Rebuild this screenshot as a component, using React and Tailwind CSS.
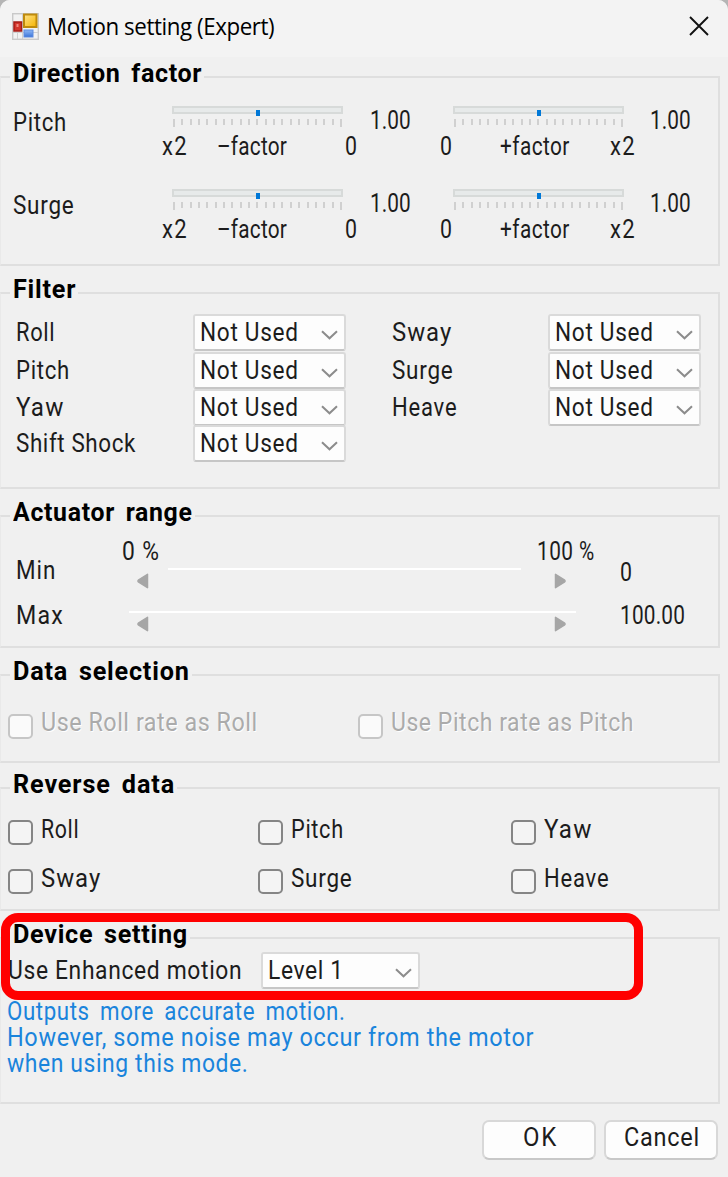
import React from "react";
import clsx from "clsx";

// Narrow UI lettering: squeezed glyphs, tracked out to fill the given width
function Text({ w, min = 0.8, className, children }) {
  const ref = React.useRef(null);
  const [fit, setFit] = React.useState({ scale: 1, spacing: 0 });

  React.useLayoutEffect(() => {
    const el = ref.current;
    el.style.letterSpacing = "0px";
    const natural = el.offsetWidth;
    const gaps = children.length - 1;
    const scale = gaps
      ? Math.min(Math.max((w / natural) * 0.95, min), 0.97)
      : 0.82;
    const spacing = gaps ? (w / scale - natural) / gaps : 0;
    el.style.letterSpacing = `${spacing}px`;
    setFit({ scale, spacing });
  }, [w, min, children]);

  return (
    <span
      className={clsx("block h-[26px] shrink-0 pl-px whitespace-nowrap", className)}
      style={{ width: w + 2 }}
    >
      <span
        ref={ref}
        className="inline-block origin-left"
        style={{ letterSpacing: fit.spacing, transform: `scaleX(${fit.scale})` }}
      >
        {children}
      </span>
    </span>
  );
}

function Group({ title, titleWidth, className, children }) {
  return (
    <section
      className={clsx(
        "w-[720px] shrink-0 border-2 border-l border-[#dfdfdf] border-l-[#e9e9e9]",
        className
      )}
    >
      <h2 className="-mt-[18px] ml-[9px] h-[26px] w-fit bg-[#f0f0f0] px-[2px] font-bold text-black [word-spacing:4px]">
        <Text w={titleWidth}>{title}</Text>
      </h2>
      {children}
    </section>
  );
}

function Track() {
  return (
    <div className="w-[171px]">
      <div className="flex h-2 justify-center border-2 border-[#d7dad9] bg-[#e7eaea]">
        <div className="mt-[2px] h-[6px] w-1 shrink-0 bg-[#0078d7]" />
      </div>
      <div className="mt-[5px] flex h-2 justify-between px-[1px]">
        {Array.from({ length: 21 }, (_, i) => (
          <span
            key={i}
            className={clsx(
              "w-[2px] bg-[#d0d0d0]",
              i === 0 || i === 20 ? "h-2" : "h-[6px]"
            )}
          />
        ))}
      </div>
    </div>
  );
}

function FactorRow({ label, labelWidth }) {
  return (
    <div className="flex h-[82.5px]">
      <div className="w-[160px] pt-[23px] pl-[11px]">
        <Text w={labelWidth}>{label}</Text>
      </div>
      <div className="w-[208px] pt-5">
        <div className="pl-[11px]">
          <Track />
        </div>
        <div className="mt-[6px] flex">
          <Text w={25}>x2</Text>
          <Text w={70} className="ml-[28px]">–factor</Text>
          <Text w={12} className="ml-[56px]">0</Text>
        </div>
      </div>
      <Text w={41} className="mt-[21px]">1.00</Text>
      <div className="ml-[27px] w-[209px] pt-5">
        <div className="pl-[14px]">
          <Track />
        </div>
        <div className="mt-[6px] flex">
          <Text w={12}>0</Text>
          <Text w={69} className="ml-[46px]">+factor</Text>
          <Text w={25} className="ml-[39px]">x2</Text>
        </div>
      </div>
      <Text w={41} className="mt-[21px] ml-[1px]">1.00</Text>
    </div>
  );
}

function Chevron() {
  return (
    <svg className="h-[10px] w-[17px]" viewBox="0 0 17 10" fill="none">
      <path d="M1 1.200 8.500 8.300 16 1.200" stroke="#8c8c8c" strokeWidth="2" />
    </svg>
  );
}

function Combo({ value, valueWidth, className }) {
  return (
    <div
      className={clsx(
        "flex h-[37px] shrink-0 justify-between rounded-[3px] border-2 border-[#dadada] border-b-[#c6c6c6] bg-[#fdfdfd] pt-[3px] pr-[6px] pl-[4px]",
        className
      )}
    >
      <Text w={valueWidth}>{value}</Text>
      <div className="pt-[11px]">
        <Chevron />
      </div>
    </div>
  );
}

const leftFilters = [
  { label: "Roll", w: 39, row: "h-[37.5px]" },
  { label: "Pitch", w: 53, row: "h-[37.5px]" },
  { label: "Yaw", w: 47, row: "h-[36px]" },
  { label: "Shift Shock", w: 119, row: "h-[37px]" },
];

const rightFilters = [
  { label: "Sway", w: 59, row: "h-[37.5px]" },
  { label: "Surge", w: 61, row: "h-[37.5px]" },
  { label: "Heave", w: 65, row: "h-[37px]" },
];

function FilterColumn({ items, className }) {
  return (
    <div className={className}>
      {items.map((item) => (
        <div key={item.label} className={clsx("flex justify-between", item.row)}>
          <Text w={item.w} className="mt-[5px]">
            {item.label}
          </Text>
          <Combo value="Not Used" valueWidth={98} className="w-[153px]" />
        </div>
      ))}
    </div>
  );
}

function Arrow({ right }) {
  return (
    <svg
      className={clsx("h-[16px] w-[12px]", right && "rotate-180")}
      viewBox="0 0 12 16"
    >
      <path
        d="M10.5 1.3 1.3 7.2Q.6 8 1.3 8.8L10.5 14.7Z"
        fill="#a6a6a6"
        stroke="#a6a6a6"
        strokeWidth="1.5"
        strokeLinejoin="round"
      />
    </svg>
  );
}

function Check({ label, w, disabled, className }) {
  return (
    <label className={clsx("flex", className)}>
      <span
        className={clsx(
          "h-[25px] w-[25px] shrink-0 rounded-[5px] border-2",
          disabled
            ? "mt-[5px] border-[#c6c6c6] bg-[#fafafa]"
            : "mt-[4px] border-[#858585] bg-[#f4f4f4]"
        )}
      />
      <Text
        w={w}
        className={clsx(
          "ml-[7px]",
          disabled && "text-[#ababab] [text-shadow:1px_1px_0_#ffffff]"
        )}
      >
        {label}
      </Text>
    </label>
  );
}

function AppIcon() {
  return (
    <svg className="h-[27px] w-[27px]" viewBox="0 0 27 27">
      <defs>
        <linearGradient id="gold" x1="0" y1="0" x2="1" y2="1">
          <stop offset="0" stopColor="#ffe38a" />
          <stop offset="1" stopColor="#f5b400" />
        </linearGradient>
        <linearGradient id="blue" x1="0" y1="0" x2="0" y2="1">
          <stop offset="0" stopColor="#8fb8f5" />
          <stop offset="1" stopColor="#3b74d8" />
        </linearGradient>
      </defs>
      <rect x=".7" y=".7" width="25.6" height="25.6" fill="#f2f2f2" stroke="#c9c9c9" strokeWidth="1.4" />
      <path d="M10.5 1v25M1 19.500h25M5.500 20v6" stroke="#d0d0d0" />
      <rect x="12" y="1.500" width="12.500" height="12.500" fill="url(#gold)" stroke="#bf8b0c" strokeWidth="2" />
      <rect x="2" y="9" width="7.500" height="9" fill="#d3362c" stroke="#a51d17" strokeWidth="1.500" />
      <rect x="4.500" y="11" width="2" height="3" fill="#f08a80" />
      <rect x="12" y="17" width="9" height="7" fill="url(#blue)" stroke="#5c8be0" />
    </svg>
  );
}

export default function App() {
  return (
    <div className="h-[1177px] w-[728px] overflow-hidden bg-[#b5b5b5]">
      <main className="relative flex h-full flex-col overflow-hidden rounded-t-[10px] bg-[#f0f0f0] font-[Roboto,sans-serif] text-[26px] leading-[26px] text-[#1c1c1c]">
        <header className="flex h-[57px] shrink-0 bg-[#f3f3f3] pt-[13px] pl-[12px] text-black">
          <AppIcon />
          <div className="ml-[7px] font-['Open_Sans',sans-serif] text-[24px]">
            <Text w={228} min={0.93}>Motion setting (Expert)</Text>
          </div>
          <svg className="mt-[3px] ml-[413px] h-5 w-5 shrink-0" viewBox="0 0 20 20">
            <path d="M1 1 19 19M19 1 1 19" stroke="#111" strokeWidth="1.9" />
          </svg>
        </header>

        <Group title="Direction factor" titleWidth={188} className="mt-[19px] h-[190px]">
          <FactorRow label="Pitch" labelWidth={53} />
          <FactorRow label="Surge" labelWidth={61} />
        </Group>

        <Group title="Filter" titleWidth={62} className="mt-[26px] h-[197px]">
          <div className="flex pt-[12px] pl-[14px]">
            <FilterColumn items={leftFilters} className="w-[331px]" />
            <FilterColumn items={rightFilters} className="ml-[45px] w-[310px]" />
          </div>
        </Group>

        <Group title="Actuator range" titleWidth={179} className="mt-[26px] h-[133px]">
          <div className="flex pt-[12px]">
            <div className="w-[120px] pt-[20px] pl-[14px]">
              <Text w={39}>Min</Text>
              <Text w={47} className="mt-[19px]">Max</Text>
            </div>
            <div className="w-[498px]">
              <div className="flex h-[31px] pt-px">
                <Text w={37}>0 %</Text>
                <Text w={57} className="ml-[376px]">100 %</Text>
              </div>
              <div className="ml-[47px] h-[2px] w-[353px] bg-white" />
              <div className="flex pt-[3px] pl-[16px]">
                <Arrow />
                <span className="w-[405px]" />
                <Arrow right />
              </div>
              <div className="mt-[22px] ml-[8px] h-[2px] w-[447px] bg-white" />
              <div className="flex pt-[3px] pl-[16px]">
                <Arrow />
                <span className="w-[405px]" />
                <Arrow right />
              </div>
            </div>
            <div className="pt-[22px]">
              <Text w={12}>0</Text>
              <Text w={65} className="mt-[17px]">100.00</Text>
            </div>
          </div>
        </Group>

        <Group title="Data selection" titleWidth={176} className="mt-[26px] h-[89px]">
          <div className="flex pt-[25px] pl-[7px]">
            <Check label="Use Roll rate as Roll" w={216} disabled className="w-[350px]" />
            <Check label="Use Pitch rate as Pitch" w={242} disabled />
          </div>
        </Group>

        <Group title="Reverse data" titleWidth={161} className="mt-[24px] h-[124px]">
          <div className="grid grid-cols-[250px_253px_1fr] gap-y-[24px] pt-[19px] pl-[7px]">
            <Check label="Roll" w={38} />
            <Check label="Pitch" w={52} />
            <Check label="Yaw" w={47} />
            <Check label="Sway" w={59} className="-mt-[4px]" />
            <Check label="Surge" w={61} className="-mt-[4px]" />
            <Check label="Heave" w={65} className="-mt-[4px]" />
          </div>
        </Group>

        <Group title="Device setting" titleWidth={174} className="mt-[26px] h-[167px]">
          <div className="flex pt-[5px] pl-[6px]">
            <Text w={234} className="mt-[5px]">Use Enhanced motion</Text>
            <Combo value="Level 1" valueWidth={75} className="ml-[18px] w-[159px]" />
          </div>
          <div className="pt-[9px] pl-[5px] text-[#1a84dc]">
            <Text w={338} className="[word-spacing:5px]">
              Outputs more accurate motion.
            </Text>
            <Text w={526}>However, some noise may occur from the motor</Text>
            <Text w={241}>when using this mode.</Text>
          </div>
        </Group>

        <footer className="mt-[16px] flex justify-end gap-[8px] pr-[10px]">
          <button className="flex h-[40px] w-[114px] justify-center rounded-[7px] border-2 border-[#d8d8d8] border-b-[#c8c8c8] bg-[#fdfdfd] pt-[2px]">
            <Text w={33}>OK</Text>
          </button>
          <button className="flex h-[40px] w-[114px] justify-center rounded-[7px] border-2 border-[#d8d8d8] border-b-[#c8c8c8] bg-[#fdfdfd] pt-[2px]">
            <Text w={75}>Cancel</Text>
          </button>
        </footer>

        {/* highlight over the device setting row */}
        <div className="absolute top-[913px] left-[1px] h-[87px] w-[642px] rounded-[17px] border-[9px] border-[#ff0000]" />
      </main>
    </div>
  );
}
